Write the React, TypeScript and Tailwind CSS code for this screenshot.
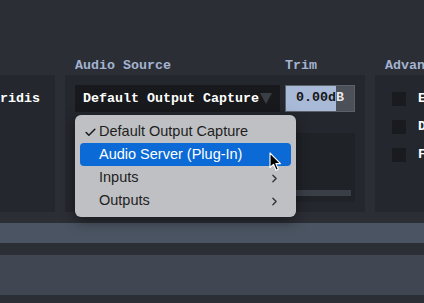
import { Check, ChevronRight } from "lucide-react";

const mono = { fontFamily: '"Liberation Mono", "DejaVu Sans Mono", monospace' };
const sans = { fontFamily: '"Liberation Sans", Arial, sans-serif' };

const menuItems = [
  { label: "Default Output Capture", checked: true },
  { label: "Audio Server (Plug-In)", active: true },
  { label: "Inputs", submenu: true },
  { label: "Outputs", submenu: true },
];

function Cursor() {
  return (
    <svg
      className="absolute left-[269px] top-[152px]"
      width="13"
      height="20"
      viewBox="0 0 13 20"
    >
      <path
        d="M1 1 L1 15.5 L4.5 12.3 L7 18.2 L9.3 17.2 L6.9 11.6 L11.5 11.6 Z"
        fill="#000"
        stroke="#fff"
        strokeWidth="1.1"
        strokeLinejoin="round"
      />
    </svg>
  );
}

function SourceMenu() {
  return (
    <div
      className="absolute left-[75px] top-[115px] w-[221px] rounded-[6px] bg-[#bec0c3] p-[5px] shadow-[0_4px_14px_rgba(0,0,0,0.45)]"
      style={sans}
    >
      {menuItems.map((item) => (
        <div
          key={item.label}
          className={`flex h-[23px] items-center rounded-[4px] pl-[4px] pr-[10px] pt-[1px] text-[14.5px] ${
            item.active ? "bg-[#0b6ad6] text-white" : "text-[#1e1e1e]"
          }`}
        >
          <span className="flex w-[15px] items-center">
            {item.checked && <Check className="h-[13px] w-[13px]" strokeWidth={3} />}
          </span>
          <span className="flex-1">{item.label}</span>
          {item.submenu && (
            <ChevronRight className="h-[13px] w-[13px] text-[#333]" strokeWidth={2.5} />
          )}
        </div>
      ))}
    </div>
  );
}

function TrimInput() {
  return (
    <div className="relative h-[27px] w-[70px] border border-[#5b616b] bg-[#4b5059]">
      <div className="absolute inset-0 flex items-center justify-center text-[13.33px] font-bold text-[#e8e8e8]">
        0.00dB
      </div>
      <div className="absolute inset-y-0 left-0 w-[50px] overflow-hidden bg-[#a9bad8]">
        <div className="flex h-full w-[68px] items-center justify-center text-[13.33px] font-bold text-[#141414]">
          0.00dB
        </div>
      </div>
    </div>
  );
}

export default function App() {
  return (
    <div className="relative h-[303px] w-[424px] overflow-hidden bg-[#2b2e35]" style={mono}>
      <div className="flex pt-[56px]">
        {/* left column, cut off */}
        <div className="flex w-[55px] flex-col">
          <div className="h-[19px]" />
          <div className="flex h-[137px] justify-end overflow-hidden bg-[#24272d] pr-[15px] pt-[14px]">
            <span className="whitespace-nowrap text-[13.33px] font-bold text-white">Viridis</span>
          </div>
        </div>

        {/* audio source panel */}
        <div className="ml-[10px] flex w-[300px] flex-col">
          <div className="flex h-[19px] text-[13.33px] font-bold text-[#a3b3d0]">
            <span className="ml-[10px] w-[210px]">Audio Source</span>
            <span>Trim</span>
          </div>
          <div className="flex h-[137px] gap-[5px] bg-[#24272d] p-[10px]">
            <div className="flex h-[27px] w-[205px] items-center bg-[#17191c] pl-[8px] text-[13.33px] font-bold text-white">
              <span className="whitespace-nowrap">Default Output Capture</span>
              <svg width="12" height="11" viewBox="0 0 12 11" className="ml-[1px]">
                <path d="M0 0 H12 L6 11 Z" fill="#3b3e44" />
              </svg>
            </div>
            <div className="flex flex-col">
              <TrimInput />
              <div className="mt-[21px] flex h-[70px] w-[70px] items-end bg-[#1f2227] px-[4px] pb-[6px]">
                <div className="h-[6px] w-full bg-[#3a3e47]" />
              </div>
            </div>
          </div>
        </div>

        {/* advanced panel */}
        <div className="ml-[10px] flex w-[120px] flex-col">
          <div className="h-[19px] pl-[10px] text-[13.33px] font-bold text-[#a3b3d0]">Advanced</div>
          <div className="flex h-[137px] flex-col gap-[14px] bg-[#24272d] pl-[17px] pt-[17px]">
            {["Enable", "Debug", "Freeze"].map((label) => (
              <div key={label} className="flex h-[14px] items-center gap-[12px]">
                <div className="h-[14px] w-[14px] shrink-0 bg-[#1a1b1e]" />
                <span className="text-[13.33px] font-bold leading-[14px] text-white">{label}</span>
              </div>
            ))}
          </div>
        </div>
      </div>

      <div className="mt-[11px] h-[20px] bg-[#4b5462]" />
      <div className="mt-[12px] h-[40px] bg-[#414752]" />

      <SourceMenu />
      <Cursor />
    </div>
  );
}
